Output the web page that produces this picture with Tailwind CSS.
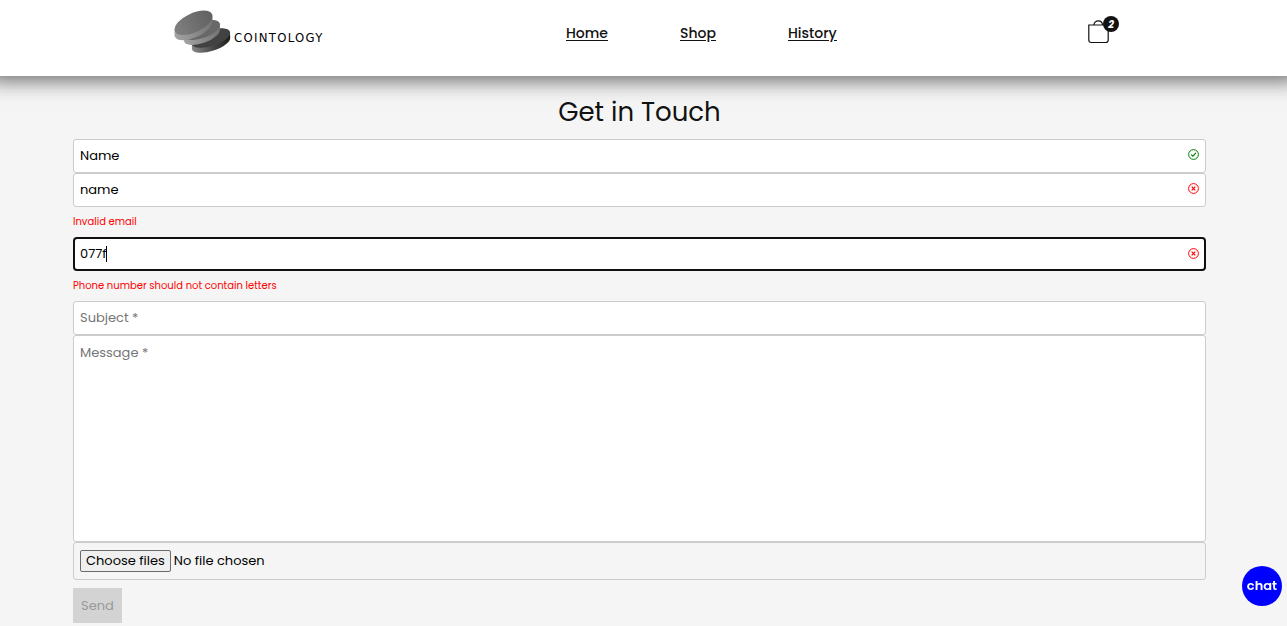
<!DOCTYPE html>
<html lang="en">
<head>
<meta charset="utf-8">
<meta name="viewport" content="width=device-width, initial-scale=1">
<title>Cointology - Get in Touch</title>
<script src="https://cdn.jsdelivr.net/npm/@tailwindcss/browser@4"></script>
</head>
<body class="min-h-screen overflow-x-hidden bg-[#f5f5f5] font-[Poppins,Inter,sans-serif] text-[13px] text-[#121212]">
<header class="relative flex h-[76px] items-start justify-between bg-white pr-[168px] pl-[173px] shadow-[0_-8px_20px_12px_rgba(18,20,22,0.65)]">
  <a href="#" class="flex w-[154px] items-center pt-[10px]" aria-label="Cointology">
    <svg class="h-[44px] w-[60px] shrink-0" viewBox="0 0 60 44" aria-hidden="true">
      <defs>
        <linearGradient id="top" x1="0" y1="0" x2="1" y2="0"><stop offset="0" stop-color="#808080"/><stop offset="1" stop-color="#606060"/></linearGradient>
        <linearGradient id="rim" x1="0" y1="0" x2="1" y2="0"><stop offset="0" stop-color="#a2a2a2"/><stop offset="1" stop-color="#707070"/></linearGradient>
        <linearGradient id="base" x1="0" y1="0" x2="1" y2="0"><stop offset="0" stop-color="#858585"/><stop offset=".5" stop-color="#484848"/><stop offset="1" stop-color="#191919"/></linearGradient>
      </defs>
      <!-- bottom coin -->
      <g fill="url(#base)">
        <ellipse cx="38" cy="33" rx="20" ry="8" transform="rotate(-18 38 33)"/>
        <ellipse cx="38" cy="31" rx="20" ry="8" transform="rotate(-18 38 31)"/>
      </g>
      <ellipse cx="38" cy="28" rx="20" ry="8" transform="rotate(-18 38 28)" fill="#424242"/>
      <!-- middle coin -->
      <g fill="url(#rim)">
        <ellipse cx="29" cy="25" rx="19" ry="8" transform="rotate(-20 29 25)"/>
        <ellipse cx="29" cy="23" rx="19" ry="8" transform="rotate(-20 29 23)"/>
      </g>
      <ellipse cx="29" cy="20" rx="19" ry="8" transform="rotate(-20 29 20)" fill="#686868"/>
      <!-- top coin -->
      <g fill="url(#rim)">
        <ellipse cx="20.500" cy="18" rx="20.500" ry="9.500" transform="rotate(-25 20.500 18)"/>
        <ellipse cx="20.500" cy="15.500" rx="20.500" ry="9.500" transform="rotate(-25 20.500 15.500)"/>
      </g>
      <ellipse cx="20.500" cy="12.800" rx="20.500" ry="9.500" transform="rotate(-25 20.500 12.800)" fill="url(#top)"/>
    </svg>
    <span class="pt-[11px] pl-px font-['Liberation_Sans_Narrow','DejaVu_Sans_Condensed','Noto_Sans',sans-serif] text-[13px] leading-4 tracking-widest text-black">COINTOLOGY</span>
  </a>
  <nav class="flex gap-[72px] pt-[22px] text-[14px] leading-[22px] font-medium underline underline-offset-2">
    <a href="#" class="w-[42px]">Home</a>
    <a href="#" class="w-[36px]">Shop</a>
    <a href="#" class="w-[50px]">History</a>
  </nav>
  <a href="#" class="relative mt-4 h-7 w-[42px] pl-[11px]" aria-label="Cart, 2 items">
    <svg class="h-7 w-[22px]" viewBox="0 0 22 28" fill="none" stroke="#121212" stroke-width="1.200" aria-hidden="true">
      <path d="M.8 9H20.200V24Q20.200 26.500 17.700 26.500H3.300Q.8 26.500.8 24Z"/>
      <path d="M6 9C6 3.500 14.500 3.500 14.500 9"/>
    </svg>
    <span class="absolute top-0 right-0 flex size-4 items-center justify-center rounded-full bg-[#121212] text-[10px] font-bold text-white italic">2</span>
  </a>
</header>

<main class="pr-[81px] pl-[73px]">
  <h1 class="pt-4 pb-[7px] text-center text-[26px] leading-10">Get in Touch</h1>
  <form>
    <div class="relative">
      <input type="text" aria-label="Name" value="Name" class="block h-[34px] w-full rounded-[3px] border border-[#ccc] bg-white pr-8 pl-[6px] text-black outline-none">
      <svg class="absolute top-[10px] right-[7px] size-[11px]" viewBox="0 0 11 11" fill="none" stroke="green" aria-hidden="true"><circle cx="5.500" cy="5.500" r="4.900"/><path d="M3.200 5.600L4.900 7.200L7.900 3.900" stroke-width="1.200"/></svg>
    </div>
    <div class="relative">
      <input type="email" aria-label="Email" aria-describedby="email-error" value="name" class="block h-[34px] w-full rounded-[3px] border border-[#ccc] bg-white pr-8 pl-[6px] text-black outline-none">
      <svg class="absolute top-[10px] right-[7px] size-[11px]" viewBox="0 0 11 11" fill="none" stroke="red" aria-hidden="true"><circle cx="5.500" cy="5.500" r="4.900"/><path d="M3.700 3.700L7.300 7.300M7.300 3.700L3.700 7.300" stroke-width="1.200"/></svg>
    </div>
    <p id="email-error" class="text-[10px] leading-[30px] text-[#ff0000]">Invalid email</p>
    <div class="relative">
      <input type="tel" aria-label="Phone" aria-describedby="phone-error" value="077f" class="block h-[34px] w-full rounded-[4px] border-2 border-[#101010] bg-white pr-8 pl-[5px] text-black outline-none">
      <span class="absolute top-[9px] left-[33px] h-4 w-px bg-black"></span>
      <svg class="absolute top-[11px] right-[7px] size-[11px]" viewBox="0 0 11 11" fill="none" stroke="red" aria-hidden="true"><circle cx="5.500" cy="5.500" r="4.900"/><path d="M3.700 3.700L7.300 7.300M7.300 3.700L3.700 7.300" stroke-width="1.200"/></svg>
    </div>
    <p id="phone-error" class="text-[10px] leading-[30px] text-[#ff0000]">Phone number should not contain letters</p>
    <input type="text" aria-label="Subject" placeholder="Subject *" class="block h-[34px] w-full rounded-[3px] border border-[#ccc] bg-white px-[6px] placeholder:text-[#757575]">
    <textarea aria-label="Message" placeholder="Message *" class="block h-[207px] w-full resize-none rounded-[3px] border border-[#ccc] bg-white px-[6px] py-[7px] leading-5 placeholder:text-[#757575]"></textarea>
    <label class="flex h-[38px] items-center gap-[3px] rounded-[3px] border border-[#ccc] px-[6px] text-black">
      <input type="file" multiple class="sr-only">
      <span class="flex h-[22px] items-center rounded-[2px] border border-[#6b6b6b] bg-[#efefef] px-[5px]">Choose files</span>
      <span>No file chosen</span>
    </label>
    <button type="submit" disabled class="mt-2 h-[35px] bg-[#d3d3d3] px-2 text-[#999]">Send</button>
  </form>
</main>
<button type="button" class="fixed right-[5px] bottom-5 size-10 rounded-full bg-[#0000ff] text-[13px] font-semibold text-white">chat</button>
</body>
</html>
